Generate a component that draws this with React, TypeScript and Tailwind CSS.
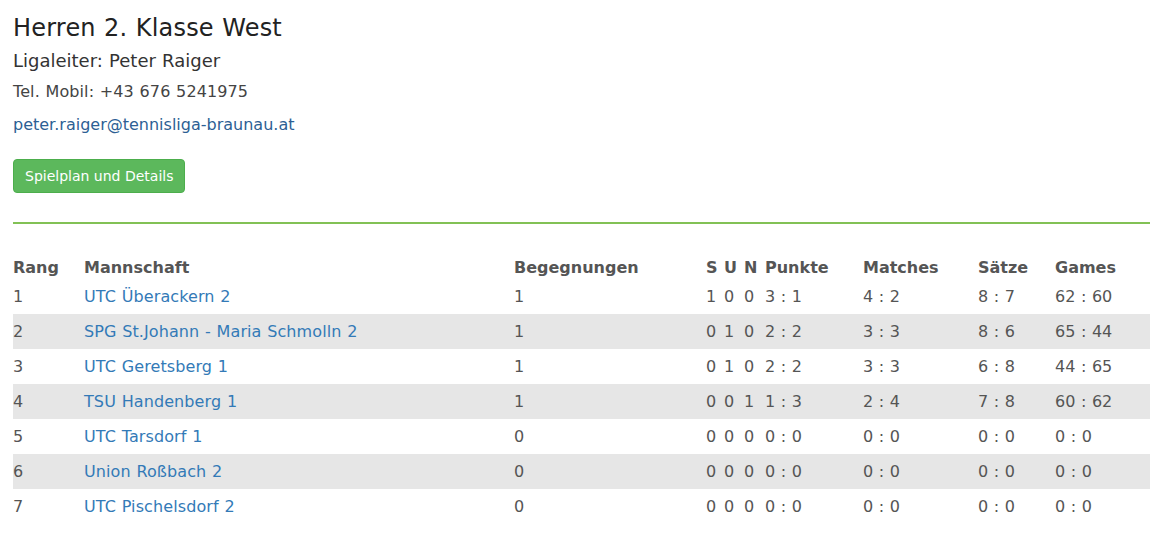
import React from 'react'

interface Row {
  rang: number
  team: string
  begegnungen: number
  s: number
  u: number
  n: number
  punkte: string
  matches: string
  saetze: string
  games: string
}

const rows: Row[] = [
  { rang: 1, team: 'UTC Überackern 2', begegnungen: 1, s: 1, u: 0, n: 0, punkte: '3 : 1', matches: '4 : 2', saetze: '8 : 7', games: '62 : 60' },
  { rang: 2, team: 'SPG St.Johann - Maria Schmolln 2', begegnungen: 1, s: 0, u: 1, n: 0, punkte: '2 : 2', matches: '3 : 3', saetze: '8 : 6', games: '65 : 44' },
  { rang: 3, team: 'UTC Geretsberg 1', begegnungen: 1, s: 0, u: 1, n: 0, punkte: '2 : 2', matches: '3 : 3', saetze: '6 : 8', games: '44 : 65' },
  { rang: 4, team: 'TSU Handenberg 1', begegnungen: 1, s: 0, u: 0, n: 1, punkte: '1 : 3', matches: '2 : 4', saetze: '7 : 8', games: '60 : 62' },
  { rang: 5, team: 'UTC Tarsdorf 1', begegnungen: 0, s: 0, u: 0, n: 0, punkte: '0 : 0', matches: '0 : 0', saetze: '0 : 0', games: '0 : 0' },
  { rang: 6, team: 'Union Roßbach 2', begegnungen: 0, s: 0, u: 0, n: 0, punkte: '0 : 0', matches: '0 : 0', saetze: '0 : 0', games: '0 : 0' },
  { rang: 7, team: 'UTC Pischelsdorf 2', begegnungen: 0, s: 0, u: 0, n: 0, punkte: '0 : 0', matches: '0 : 0', saetze: '0 : 0', games: '0 : 0' },
]

const headers = [
  { label: 'Rang', w: 'w-[71px]' },
  { label: 'Mannschaft', w: 'w-[430px]' },
  { label: 'Begegnungen', w: 'w-[192px]' },
  { label: 'S', w: 'w-[18px]' },
  { label: 'U', w: 'w-[20px]' },
  { label: 'N', w: 'w-[21px]' },
  { label: 'Punkte', w: 'w-[98px]' },
  { label: 'Matches', w: 'w-[115px]' },
  { label: 'Sätze', w: 'w-[77px]' },
  { label: 'Games', w: 'w-[95px]' },
]

export default function App() {
  return (
    <div className="min-h-screen bg-white pl-[13px] pr-[8px] pt-[12px] text-[#333] [word-spacing:0.5px] font-['DejaVu_Sans',Verdana,sans-serif]">
      {/* Liga info */}
      <h1 className="text-[24px] leading-[32px] tracking-[0.2px] text-[#222]">Herren 2. Klasse West</h1>
      <p className="mt-[4px] text-[18px] leading-[26px] text-[#333]">Ligaleiter: Peter Raiger</p>
      <p className="mt-[7px] text-[16px] leading-[22px] tracking-[0.1px] text-[#444]">Tel. Mobil: +43 676 5241975</p>
      <p className="mt-[11px] text-[16px] leading-[22px]">
        <a href="#" className="text-[#2d5f94]">peter.raiger@tennisliga-braunau.at</a>
      </p>
      <button className="mt-[23px] h-[34px] px-[11px] rounded-[4px] bg-[#5cb85c] border border-[#4cae4c] text-white text-[14px] leading-[20px]">
        Spielplan und Details
      </button>

      <div className="mt-[29px] h-[2px] bg-[#82c155]" />

      {/* Tabelle */}
      <table className="mt-[26px] w-full table-fixed border-collapse text-[16px] leading-[23px]">
        <thead>
          <tr className="h-[29px]">
            {headers.map((h) => (
              <th key={h.label} className={`${h.w} p-0 align-bottom text-left font-bold text-[#555]`}>
                {h.label}
              </th>
            ))}
          </tr>
        </thead>
        <tbody>
          {rows.map((r) => (
            <tr key={r.rang} className={`h-[35px] ${r.rang % 2 === 0 ? 'bg-[#e6e6e6]' : ''}`}>
              <td className="p-0 text-[#555]">{r.rang}</td>
              <td className="p-0">
                <a href="#" className="text-[#337ab7] tracking-[0.1px]">{r.team}</a>
              </td>
              <td className="p-0 text-[#555]">{r.begegnungen}</td>
              <td className="p-0 text-[#555]">{r.s}</td>
              <td className="p-0 text-[#555]">{r.u}</td>
              <td className="p-0 text-[#555]">{r.n}</td>
              <td className="p-0 text-[#555]">{r.punkte}</td>
              <td className="p-0 text-[#555]">{r.matches}</td>
              <td className="p-0 text-[#555]">{r.saetze}</td>
              <td className="p-0 text-[#555]">{r.games}</td>
            </tr>
          ))}
        </tbody>
      </table>
    </div>
  )
}
